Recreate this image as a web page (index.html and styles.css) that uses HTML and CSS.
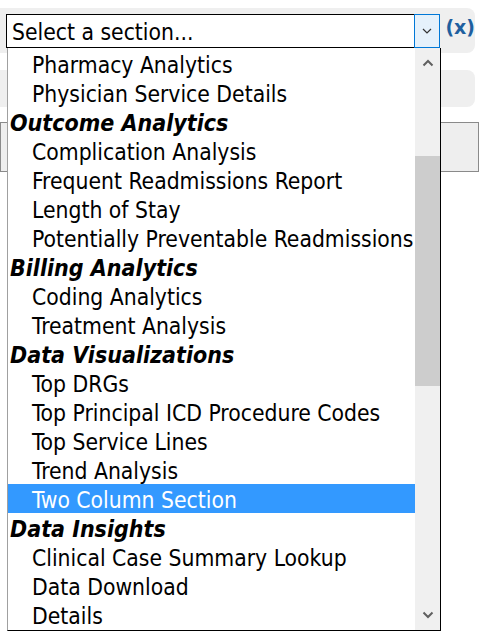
FILE: index.html
```html
<!DOCTYPE html>
<html>
<head>
<meta charset="utf-8">
<link rel="stylesheet" href="styles.css">
</head>
<body>
<div class="page">
  <div class="panel top-panel">
    <div class="select">
      <span class="select-text">Select a section...</span>
      <span class="select-btn">
        <svg width="10" height="6" viewBox="0 0 10 6"><path d="M1 1 L5 5 L9 1" fill="none" stroke="#333" stroke-width="1.2"/></svg>
      </span>
    </div>
    <a class="clear">(x)</a>
  </div>
  <div class="panel second-panel"></div>
  <div class="box"></div>

  <div class="dropdown">
    <ul class="list">
      <li class="opt">Pharmacy Analytics</li>
      <li class="opt">Physician Service Details</li>
      <li class="grp">Outcome Analytics</li>
      <li class="opt">Complication Analysis</li>
      <li class="opt">Frequent Readmissions Report</li>
      <li class="opt">Length of Stay</li>
      <li class="opt">Potentially Preventable Readmissions</li>
      <li class="grp">Billing Analytics</li>
      <li class="opt">Coding Analytics</li>
      <li class="opt">Treatment Analysis</li>
      <li class="grp">Data Visualizations</li>
      <li class="opt">Top DRGs</li>
      <li class="opt">Top Principal ICD Procedure Codes</li>
      <li class="opt">Top Service Lines</li>
      <li class="opt">Trend Analysis</li>
      <li class="opt selected">Two Column Section</li>
      <li class="grp">Data Insights</li>
      <li class="opt">Clinical Case Summary Lookup</li>
      <li class="opt">Data Download</li>
      <li class="opt">Details</li>
    </ul>
    <div class="scrollbar">
      <span class="arrow">
        <svg width="12" height="8" viewBox="0 0 12 8"><path d="M1.5 6.5 L6 2 L10.5 6.5" fill="none" stroke="#606060" stroke-width="2"/></svg>
      </span>
      <div class="track">
        <div class="thumb"></div>
      </div>
      <span class="arrow">
        <svg width="12" height="8" viewBox="0 0 12 8"><path d="M1.5 1.5 L6 6 L10.5 1.5" fill="none" stroke="#606060" stroke-width="2"/></svg>
      </span>
    </div>
  </div>
</div>
</body>
</html>
```

FILE: styles.css
```css
* { box-sizing: border-box; }
html, body { margin: 0; padding: 0; background: #fff; }
body {
  font-family: "DejaVu Sans Condensed", "DejaVu Sans", Verdana, sans-serif;
  font-stretch: condensed;
  font-size: 22.7px;
  color: #000;
}
.page {
  position: relative;
  width: 480px;
  height: 636px;
  padding-top: 8px;
}
.panel {
  background: #efefef;
  width: 475px;
  border-radius: 0 8px 8px 0;
}
.top-panel {
  height: 45px;
  padding: 6px 0 0 6px;
  display: flex;
  align-items: flex-start;
  gap: 5px;
}
.select {
  width: 435px;
  height: 34px;
  border: 1px solid #000;
  background: #fff;
  display: flex;
  align-items: stretch;
}
.select-text {
  flex: 1;
  padding-left: 5px;
  line-height: 32px;
  padding-top: 1px;
  white-space: nowrap;
}
.select-btn {
  width: 26px;
  margin: -1px -1px -1px 0;
  border: 1px solid #0078d7;
  background: #e5f1fb;
  display: flex;
  align-items: center;
  justify-content: center;
}
.clear {
  font-family: "DejaVu Sans", Verdana, sans-serif;
  font-stretch: normal;
  color: #1e5f9f;
  font-weight: bold;
  font-size: 19px;
  line-height: 26px;
}
.second-panel {
  height: 37px;
  margin-top: 17px;
}
.box {
  width: 479px;
  height: 50px;
  margin-top: 15px;
  border: 1px solid #8a8a8a;
  background: #eeeeee;
}
.dropdown {
  position: absolute;
  left: 7px;
  top: 48px;
  width: 434px;
  height: 583px;
  background: #fff;
  border-left: 1px solid #a0a0a0;
  border-right: 1px solid #000;
  border-bottom: 1px solid #000;
  padding-top: 1px;
  display: flex;
}
.list {
  list-style: none;
  margin: 0;
  padding: 0;
  flex: 1;
  overflow: hidden;
}
.list li {
  height: 29px;
  line-height: 29px;
  padding-top: 2px;
  white-space: nowrap;
}
.opt { padding-left: 24px; }
.grp {
  padding-left: 2px;
  font-weight: bold;
  font-style: italic;
  font-size: 23px;
}
.selected {
  background: #3399ff;
  color: #fff;
}
.scrollbar {
  width: 25px;
  background: #f0f0f0;
  margin-top: -1px;
  display: flex;
  flex-direction: column;
}
.arrow {
  height: 30px;
  display: flex;
  align-items: center;
  justify-content: center;
}
.track {
  flex: 1;
  padding-top: 78px;
}
.thumb {
  height: 230px;
  background: #cdcdcd;
}
```
